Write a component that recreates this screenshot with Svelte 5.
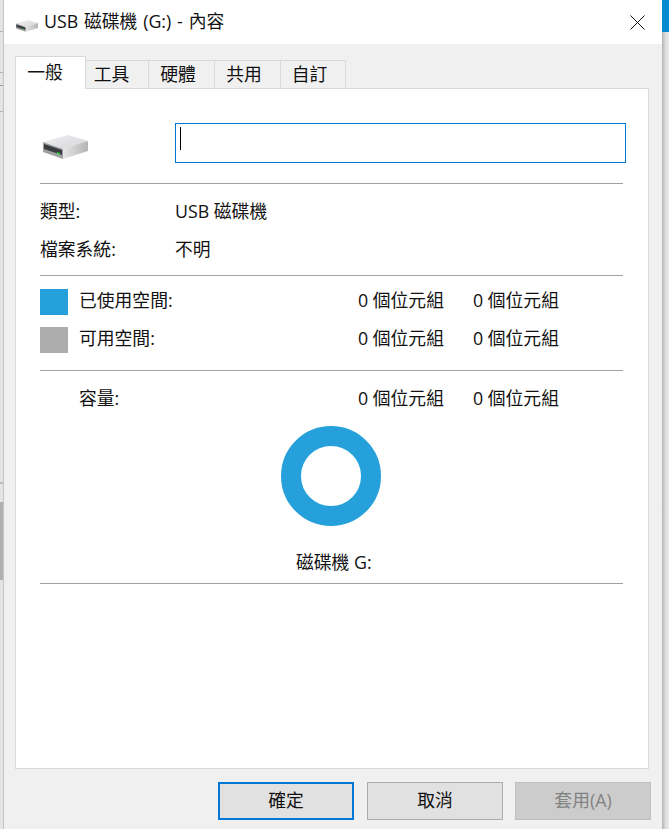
<script>
	const tabs = ['一般', '工具', '硬體', '共用', '自訂'];
	const spaceRows = [
		{ label: '已使用空間:', swatch: 'used' },
		{ label: '可用空間:', swatch: 'free' }
	];
	const bytes = '0 個位元組';
</script>

{#snippet driveIcon(cls)}
	<svg class={cls} viewBox="0 0 45 24" aria-hidden="true">
		<defs>
			<linearGradient id="driveTop" x1="0" y1="0" x2="1" y2="1">
				<stop offset="0" stop-color="#f1f1f3" />
				<stop offset="1" stop-color="#d4d4d8" />
			</linearGradient>
			<linearGradient id="driveSide" x1="0" y1="0" x2="1" y2="0">
				<stop offset="0" stop-color="#e6e6e6" />
				<stop offset="1" stop-color="#b4b4b4" />
			</linearGradient>
		</defs>
		<polygon points="0,7 25,0 45,6 20,14" fill="url(#driveTop)" />
		<polygon points="20,14 45,6 45,16 20,24" fill="url(#driveSide)" />
		<polygon points="0,7 20,14 20,24 0,17" fill="#a0a0a0" />
		<polygon points="1,9 19,15 19,20 1,14" fill="#3a3d3f" />
		<polygon points="14,17 17,18 17,20 14,19" fill="#2fd04a" />
	</svg>
{/snippet}

<div class="screen">
	<div class="strip-left"></div>

	<div class="window">
		<header class="titlebar">
			{@render driveIcon('icon-small')}
			<span class="title">USB 磁碟機 (G:) - 內容</span>
			<svg class="close" viewBox="0 0 15 15" aria-hidden="true">
				<path d="M0.5 0.5L14.5 14.5M14.5 0.5L0.5 14.5" stroke="#111" stroke-width="1" fill="none" />
			</svg>
		</header>

		<div class="body">
			<div class="tabs">
				{#each tabs as tab, i}
					<div class="tab" class:active={i === 0}>{tab}</div>
				{/each}
			</div>

			<div class="panel">
				<div class="name-row">
					<div class="icon-cell">{@render driveIcon('icon-large')}</div>
					<div class="name-input"><div class="caret"></div></div>
				</div>
				<hr />

				<div class="info-row first"><span>類型:</span><span>USB 磁碟機</span></div>
				<div class="info-row"><span>檔案系統:</span><span>不明</span></div>
				<hr class="sep-space" />

				{#each spaceRows as row}
					<div class="space-row">
						<div class="swatch {row.swatch}"></div>
						<span class="space-label">{row.label}</span>
						<span class="num">{bytes}</span>
						<span class="num">{bytes}</span>
					</div>
				{/each}
				<hr class="sep-capacity" />

				<div class="space-row capacity">
					<div class="swatch none"></div>
					<span class="space-label">容量:</span>
					<span class="num">{bytes}</span>
					<span class="num">{bytes}</span>
				</div>

				<div class="donut"></div>
				<div class="drive-label">磁碟機 G:</div>
				<hr class="sep-bottom" />
			</div>

			<div class="buttons">
				<button class="default">確定</button>
				<button>取消</button>
				<button class="disabled">套用(A)</button>
			</div>
		</div>
	</div>

	<div class="strip-right"></div>
</div>

<style>
	:global(body) {
		margin: 0;
		background: #f0f0f0;
	}

	.screen {
		display: flex;
		width: 669px;
		height: 829px;
		overflow: hidden;
		font-family: 'Open Sans', 'Noto Sans CJK TC', sans-serif;
		font-size: 17.8px;
		color: #111;
	}

	.strip-left {
		width: 3px;
		flex: none;
		border-right: 1px solid #c4c4c4;
		background:
			linear-gradient(#b0b0b0, #b0b0b0) 0 502px / 100% 78px no-repeat,
			linear-gradient(#bdbdbd, #bdbdbd) 0 482px / 100% 2px no-repeat,
			linear-gradient(#b4b4b4, #b4b4b4) 0 31px / 100% 1px no-repeat,
			linear-gradient(#b4b4b4, #b4b4b4) 0 72px / 100% 1px no-repeat,
			linear-gradient(#9a9a9a, #9a9a9a) 0 85px / 100% 1px no-repeat,
			linear-gradient(#b4b4b4, #b4b4b4) 0 111px / 100% 1px no-repeat,
			#e4e4e4;
	}

	.window {
		width: 658px;
		flex: none;
		display: flex;
		flex-direction: column;
	}

	.strip-right {
		flex: 1;
		background:
			linear-gradient(#0a88cf, #0a88cf) 0 0 / 100% 32px no-repeat,
			linear-gradient(90deg, #b4b4b4, #dcdcdc 50%, #ececec);
	}

	.titlebar {
		height: 44px;
		flex: none;
		background: #fff;
		display: flex;
		align-items: center;
		padding: 0 17px 0 12px;
	}

	.icon-small {
		width: 22px;
		height: 12px;
		margin: 7px 6px 0 0;
	}

	.title {
		flex: 1;
		line-height: 1;
		word-spacing: 1.2px;
	}

	.close {
		width: 15px;
		height: 15px;
	}

	.body {
		flex: 1;
		background: #f0f0f0;
		padding: 12px 11px 0 11px;
		display: flex;
		flex-direction: column;
		min-height: 0;
	}

	.tabs {
		display: flex;
		align-items: flex-end;
		height: 33px;
		flex: none;
		margin-bottom: -1px;
		position: relative;
		z-index: 1;
	}

	.tab {
		width: 66px;
		height: 29px;
		box-sizing: border-box;
		border: 1px solid #d9d9d9;
		border-left: 0;
		padding: 0 7px 3px 0;
		display: flex;
		align-items: center;
		justify-content: center;
	}

	.tab:nth-child(2) {
		width: 63px;
		padding-right: 11px;
	}

	.tab:nth-child(5) {
		width: 65px;
	}

	.tab.active {
		width: 71px;
		height: 33px;
		background: #fff;
		border-left: 1px solid #d9d9d9;
		border-bottom: 0;
		padding: 0 11px 4px 0;
	}

	.panel {
		height: 681px;
		box-sizing: border-box;
		flex: none;
		width: 634px;
		background: #fff;
		border: 1px solid #d9d9d9;
		padding: 0 25px 0 24px;
	}

	hr {
		border: 0;
		height: 1px;
		background: #a0a0a0;
		margin: 0;
	}

	.name-row {
		display: flex;
		align-items: flex-start;
		padding-top: 34px;
	}

	.icon-cell {
		width: 135px;
		padding: 12px 0 0 3px;
		box-sizing: border-box;
		line-height: 0;
	}

	.icon-large {
		width: 45px;
		height: 24px;
	}

	.name-input {
		width: 451px;
		height: 40px;
		box-sizing: border-box;
		margin-right: -3px;
		flex: none;
		border: 1px solid #0078d7;
		padding: 3px 4px;
	}

	.caret {
		width: 1px;
		height: 23px;
		background: #000;
	}

	.name-row + hr {
		margin-top: 20px;
	}

	.info-row {
		display: grid;
		grid-template-columns: 135px 1fr;
		height: 38px;
		align-items: center;
	}

	.info-row span {
		padding-bottom: 2px;
	}

	.info-row.first {
		margin-top: 8px;
	}

	.sep-space {
		margin-top: 7px;
	}

	.space-row {
		display: grid;
		grid-template-columns: 40px 278px 115px 1fr;
		height: 38px;
		align-items: center;
	}

	.space-row span {
		padding-bottom: 7px;
	}

	.space-label {
		margin-left: -1px;
	}

	.sep-space + .space-row {
		margin-top: 7px;
	}

	.swatch {
		width: 28px;
		height: 26px;
	}

	.swatch.used {
		background: #26a0da;
	}

	.swatch.free {
		background: #adadad;
	}

	.swatch.none {
		background: transparent;
	}

	.sep-capacity {
		margin-top: 11px;
	}

	.capacity {
		margin-top: 10px;
	}

	.donut {
		width: 60px;
		height: 60px;
		border: 20px solid #26a0da;
		border-radius: 50%;
		margin: 7px 0 0 241px;
	}

	.drive-label {
		margin-top: 24px;
		height: 24px;
		line-height: 24px;
		padding-left: 256px;
		white-space: nowrap;
	}

	.sep-bottom {
		margin-top: 9px;
	}

	.buttons {
		display: flex;
		gap: 13px;
		margin-top: 13px;
		padding-left: 203px;
		flex: none;
	}

	button {
		width: 136px;
		height: 38px;
		box-sizing: border-box;
		flex: none;
		background: #e1e1e1;
		border: 1px solid #adadad;
		font: inherit;
		color: #111;
		padding: 0 0 5px;
	}

	button.default {
		border: 2px solid #0078d7;
	}

	button.disabled {
		background: #cccccc;
		border-color: #bfbfbf;
		color: #838383;
		margin-left: -1px;
	}
</style>
